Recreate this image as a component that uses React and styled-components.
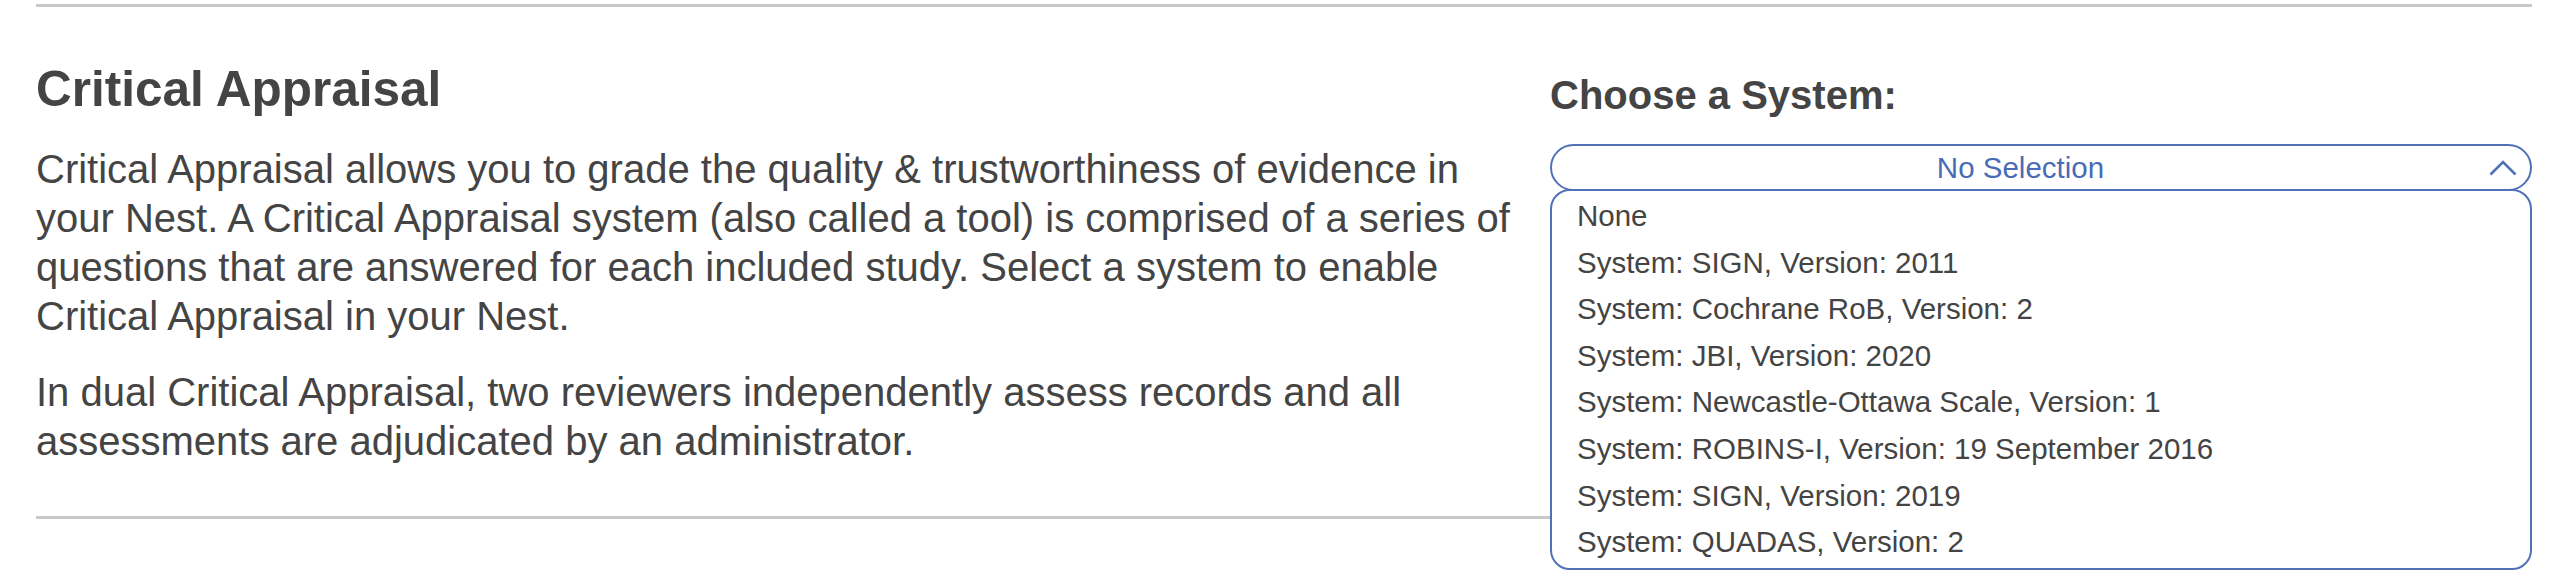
import styled, { createGlobalStyle } from 'styled-components'

const GlobalStyle = createGlobalStyle`
    body {
        margin: 0;
        background: #ffffff;
        font-family: "Liberation Sans", Arial, sans-serif;
        color: #444444;
    }
`;

const Page = styled.div`
    box-sizing: border-box;
    min-height: 577px;
    padding: 4px 28px 0 36px;
`;

const Rule = styled.div`
    height: 3px;
    background-color: #c8c8c8;
`;

const Section = styled.section`
    display: grid;
    grid-template-columns: 1500px 1fr;
    column-gap: 14px;
    padding-top: 54px;
`;

const Heading = styled.h2`
    margin: 0 0 29px;
    font-size: 49.5px;
    line-height: 55px;
    font-weight: 700;
    color: #444444;
`;

const Paragraph = styled.p`
    margin: 0 0 27px;
    font-size: 40px;
    line-height: 49px;
    &:last-child {
        margin-bottom: 50px;
    }
`;

const Picker = styled.div`
    display: flex;
    flex-direction: column;
`;

const Label = styled.h3`
    margin: 11px 0 26px;
    font-size: 40px;
    line-height: 46px;
    font-weight: 700;
    color: #444444;
`;

const SelectWrap = styled.div`
    position: relative;
`;

const SelectBox = styled.div`
    box-sizing: border-box;
    height: 47px;
    border: 2px solid #5071b6;
    border-radius: 24px;
    display: flex;
    align-items: center;
    padding-right: 13px;
    font-size: 29.5px;
    color: #4a6bb5;
    background: #ffffff;
`;

const SelectText = styled.span`
    flex: 1;
    text-align: center;
`;

const Chevron = styled.svg`
    display: block;
    flex: none;
`;

const Menu = styled.ul`
    position: absolute;
    z-index: 2;
    left: 0;
    right: 0;
    top: calc(100% - 2px);
    margin: 0;
    padding: 2px 0;
    list-style: none;
    background: #ffffff;
    border: 2px solid #5071b6;
    border-radius: 20px;
`;

const Option = styled.li`
    padding: 0 25px;
    font-size: 29.5px;
    line-height: 46.6px;
    color: #444444;
    white-space: nowrap;
`;

const systems = [
    'None',
    'System: SIGN, Version: 2011',
    'System: Cochrane RoB, Version: 2',
    'System: JBI, Version: 2020',
    'System: Newcastle-Ottawa Scale, Version: 1',
    'System: ROBINS-I, Version: 19 September 2016',
    'System: SIGN, Version: 2019',
    'System: QUADAS, Version: 2',
];

function App() {
    return (
        <>
            <GlobalStyle />
            <Page>
                <Rule />
                <Section>
                    <div>
                        <Heading>Critical Appraisal</Heading>
                        <Paragraph>
                            Critical Appraisal allows you to grade the quality &amp; trustworthiness of evidence in your Nest. A Critical Appraisal system (also called a tool) is comprised of a series of questions that are answered for each included study. Select a system to enable Critical Appraisal in your Nest.
                        </Paragraph>
                        <Paragraph>
                            In dual Critical Appraisal, two reviewers independently assess records and all assessments are adjudicated by an administrator.
                        </Paragraph>
                    </div>
                    <Picker>
                        <Label>Choose a System:</Label>
                        <SelectWrap>
                            <SelectBox>
                                <SelectText>No Selection</SelectText>
                                <Chevron width="28" height="16" viewBox="0 0 28 16">
                                    <polyline points="1.5,14.5 14,2 26.5,14.5" fill="none" stroke="#5071b6" strokeWidth="2.6" />
                                </Chevron>
                            </SelectBox>
                            <Menu>
                                {systems.map((s) => (
                                    <Option key={s}>{s}</Option>
                                ))}
                            </Menu>
                        </SelectWrap>
                    </Picker>
                </Section>
                <Rule />
            </Page>
        </>
    )
}

export default App
